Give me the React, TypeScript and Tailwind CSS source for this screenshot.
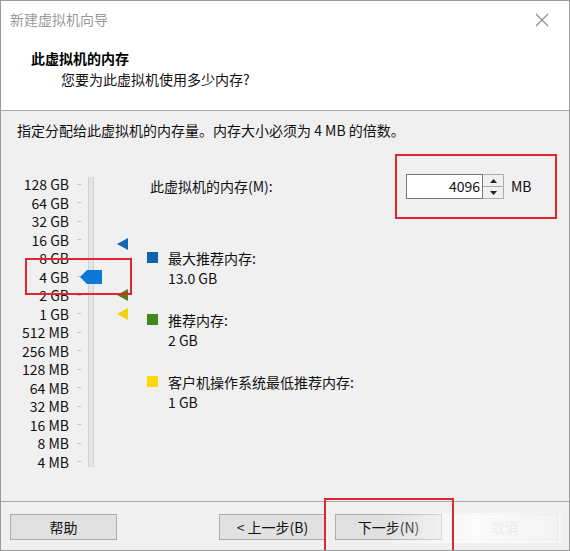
import React from 'react'

const font = { fontFamily: '"Noto Sans CJK SC", "Noto Sans", sans-serif' }

const sizes = [
  '128 GB', '64 GB', '32 GB', '16 GB', '8 GB', '4 GB', '2 GB', '1 GB',
  '512 MB', '256 MB', '128 MB', '64 MB', '32 MB', '16 MB', '8 MB', '4 MB',
]

function LegendItem({ color, label, value }: { color: string; label: string; value: string }) {
  return (
    <div className="flex items-start gap-[10px]">
      <span className={`mt-[4px] w-[11px] h-[11px] ${color}`} />
      <div className="leading-[20px]">
        <div>{label}</div>
        <div>{value}</div>
      </div>
    </div>
  )
}

function Btn({ children, faded }: { children: React.ReactNode; faded?: boolean }) {
  return (
    <div
      className={`w-[107px] h-[26px] flex items-center justify-center border text-[14px] ${
        faded ? 'border-[#d8d8d8] bg-[#ececec] text-[#c8c8c8]' : 'border-[#adadad] bg-[#e1e1e1] text-[#111]'
      }`}
    >
      {children}
    </div>
  )
}

export default function App() {
  return (
    <div style={font} className="relative w-[570px] h-[551px] flex flex-col bg-[#f0f0f0] border border-[#9a9a9a] text-[14px] text-[#111] overflow-hidden">
      {/* title bar */}
      <div className="h-[37px] bg-white flex items-center justify-between pl-[9px] pr-[20px]">
        <span className="text-[14px] text-[#9a9a9a]">新建虚拟机向导</span>
        <svg width="14" height="14" viewBox="0 0 14 14" className="text-[#8a8a8a]">
          <path d="M1 1 L13 13 M13 1 L1 13" stroke="currentColor" strokeWidth="1.1" />
        </svg>
      </div>

      {/* header */}
      <div className="h-[73px] bg-white border-b border-[#a8a8a8] pl-[30px] pt-[9px]">
        <div className="text-[14px] font-bold leading-[22px] text-black">此虚拟机的内存</div>
        <div className="pl-[30px] leading-[20px]">您要为此虚拟机使用多少内存?</div>
      </div>

      {/* body */}
      <div className="flex-1 flex flex-col">
        <div className="pl-[16px] pt-[9px] leading-[20px]">指定分配给此虚拟机的内存量。内存大小必须为 4 MB 的倍数。</div>

        <div className="flex mt-[34px]">
          {/* slider */}
          <div className="relative w-[135px] h-[300px]">
            <div className="absolute left-0 top-[1px] w-[80px] flex flex-col">
              {sizes.map((s) => (
                <div key={s} className="h-[18.53px] flex items-center justify-end">
                  <span className="text-right leading-none">{s}</span>
                  <span className="ml-[8px] w-[4px] h-px bg-[#c4c4c4]" />
                </div>
              ))}
            </div>
            {/* track */}
            <div className="absolute left-[87px] top-[3px] w-[6px] h-[290px] bg-[#e4e4e4] border-x border-[#d2d2d2]" />
            {/* thumb */}
            <svg className="absolute left-[78px] top-[95px]" width="24" height="16" viewBox="0 0 24 16">
              <polygon points="1,8 8,1 23,1 23,15 8,15" fill="#0a78d7" />
            </svg>
            {/* markers */}
            <svg className="absolute left-[116px] top-[64px]" width="12" height="12" viewBox="0 0 12 12">
              <polygon points="0,6 11,0 11,12" fill="#1466b0" />
            </svg>
            <svg className="absolute left-[116px] top-[115px]" width="12" height="12" viewBox="0 0 12 12">
              <polygon points="0,6 11,0 11,12" fill="#5c7a1f" />
            </svg>
            <svg className="absolute left-[116px] top-[134px]" width="12" height="12" viewBox="0 0 12 12">
              <polygon points="0,6 11,0 11,12" fill="#f2d20f" />
            </svg>
            {/* highlight */}
            <div className="absolute left-[24px] top-[84px] w-[107px] h-[37px] border-2 border-[#e0262e]" />
          </div>

          {/* right content */}
          <div className="flex-1 flex flex-col pl-[11px]">
            <div className="relative flex items-start">
              <span className="mt-[2px] pl-[3px] leading-[20px]">此虚拟机的内存(M):</span>
              <div className="ml-auto mr-[12px] relative w-[162px] h-[65px] -mt-[20px] border-2 border-[#e0262e] flex items-center pl-[9px]">
                <div className="w-[77px] h-[25px] bg-white border border-[#7a7a7a] flex items-center justify-end pr-[2px]">4096</div>
                <div className="w-[21px] h-[25px] flex flex-col border border-l-0 border-[#acacac] bg-[#f0f0f0]">
                  <div className="flex-1 flex items-center justify-center border-b border-[#acacac]">
                    <svg width="7" height="4" viewBox="0 0 7 4"><polygon points="0,4 3.5,0 7,4" fill="#222" /></svg>
                  </div>
                  <div className="flex-1 flex items-center justify-center">
                    <svg width="7" height="4" viewBox="0 0 7 4"><polygon points="0,0 3.5,4 7,0" fill="#222" /></svg>
                  </div>
                </div>
                <span className="ml-[7px]">MB</span>
              </div>
            </div>
            <div className="flex flex-col gap-[22px] mt-[29px]">
              <LegendItem color="bg-[#0f62ad]" label="最大推荐内存:" value="13.0 GB" />
              <LegendItem color="bg-[#3f8a1d]" label="推荐内存:" value="2 GB" />
              <LegendItem color="bg-[#ffd80c]" label="客户机操作系统最低推荐内存:" value="1 GB" />
            </div>
          </div>
        </div>
      </div>

      {/* footer */}
      <div className="h-[49px] border-t border-[#a8a8a8] flex items-start pt-[12px] pl-[9px] pr-[11px]">
        <Btn>帮助</Btn>
        <div className="ml-auto flex gap-[9px]">
          <Btn>&lt; 上一步(B)</Btn>
          <Btn>下一步(N)</Btn>
          <Btn faded>取消</Btn>
        </div>
      </div>

      {/* watermark haze */}
      <div className="absolute left-[385px] top-[512px] w-[175px] h-[30px] bg-gradient-to-r from-transparent via-white/80 to-white/40" />
      {/* highlight on next button */}
      <div className="absolute left-[323px] top-[497px] w-[130px] h-[60px] border-2 border-[#e0262e]" />
    </div>
  )
}
